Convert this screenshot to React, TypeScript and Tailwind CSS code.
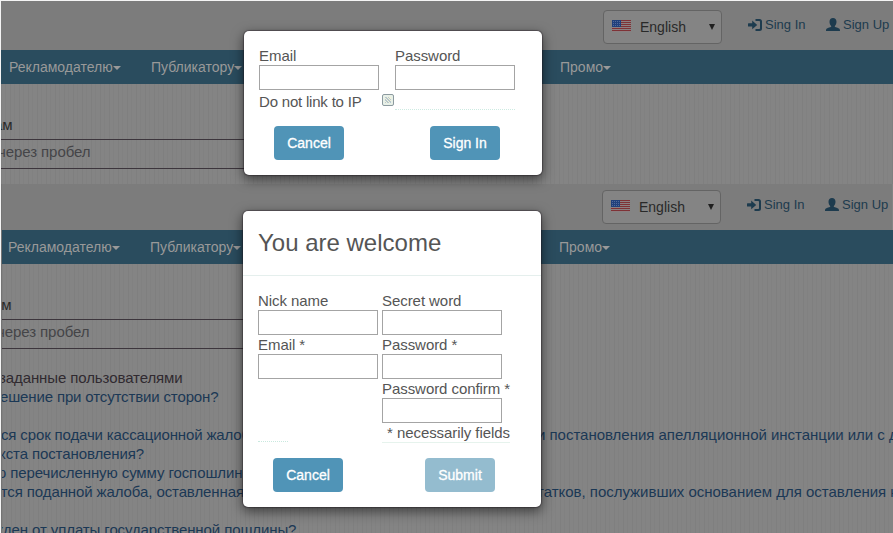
import type { ReactNode } from "react";

const stripes =
  "bg-[#848484] bg-[repeating-linear-gradient(90deg,#7f7f7f_0,#7f7f7f_1px,transparent_1px,transparent_4px,#818181_4px,#818181_5px,transparent_5px,transparent_9px)]";

function Flag() {
  return (
    <svg width="19" height="12" viewBox="0 0 19 12" shapeRendering="crispEdges" className="mb-[2px] shrink-0">
      <rect width="19" height="12" fill="#8c8082" />
      {[0, 2, 4, 6, 8, 10].map((y) => (
        <rect key={y} y={y} width="19" height="1" fill="#7e3236" />
      ))}
      <rect width="9" height="7" fill="#20407c" />
      {[1, 3, 5].map((y) =>
        [1, 3, 5, 7].map((x) => <rect key={`${x}-${y}`} x={x} y={y} width="1" height="1" fill="#52699a" />)
      )}
    </svg>
  );
}

function LogInIcon() {
  return (
    <svg width="14" height="12" viewBox="0 0 14 12" fill="#1d3b4e" className="mb-px shrink-0">
      <path d="M.5 4.300h3.700V1.600l5 4.300-5 4.300V7.600H.5Q0 7.600 0 7V4.900Q0 4.300.5 4.300z" />
      <path d="M7.500 0h4Q14 0 14 2.500v7Q14 12 11.500 12h-4v-2h3.700q.8 0 .8-.8V2.800q0-.8-.8-.8H7.500z" />
    </svg>
  );
}

function UserIcon() {
  return (
    <svg width="14" height="13" viewBox="0 0 14 13" fill="#1d3b4e" className="mb-[2px] shrink-0">
      <path d="M7 0C9.200 0 10.500 1.400 10.500 3.700c0 1.900-.7 3.300-1.700 4.200v.9c1 .6 3.200 1.100 4.200 1.700.7.4 1 1 1 2.500H0c0-1.500.3-2.100 1-2.500 1-.6 3.200-1.100 4.200-1.700v-.9c-1-.9-1.700-2.300-1.700-4.200C3.500 1.400 4.800 0 7 0z" />
    </svg>
  );
}

function Caret() {
  return <span className="mt-[2px] h-0 w-0 border-x-4 border-t-4 border-x-transparent border-t-[#999]" />;
}

function Header() {
  return (
    <div className="flex h-[49px] justify-end bg-[#7c7c7c] text-[#1d3b4e]">
      <div className="mt-[9px] flex h-[34px] w-[119px] items-center rounded-[4px] border border-[#646464] bg-[#848484] pl-2">
        <Flag />
        <span className="ml-[9px] w-[69px] text-[14px] text-[#292929]">English</span>
        <span className="h-0 w-0 border-x-[3.5px] border-t-[6px] border-x-transparent border-t-[#1f1f1f]" />
      </div>
      <div className="ml-[26px] mt-[14px] flex h-5 w-[78px] items-center gap-[3px] text-[13px]">
        <LogInIcon />
        <span>Sing In</span>
      </div>
      <div className="mt-[14px] flex h-5 w-[67px] items-center gap-[3px] text-[13px]">
        <UserIcon />
        <span>Sign Up</span>
      </div>
    </div>
  );
}

function NavItem({ children, className }: { children: ReactNode; className: string }) {
  return (
    <div className={`flex items-center text-[14px] ${className}`}>
      <span>{children}</span>
      <Caret />
    </div>
  );
}

function Nav({ inset }: { inset: string }) {
  return (
    <nav className={`flex h-[34px] bg-[#2a4c5e] text-[#999] ${inset}`}>
      <NavItem className="w-[142px]">Рекламодателю</NavItem>
      <NavItem className="w-[409px]">Публикатору</NavItem>
      <NavItem className="w-[70px]">Промо</NavItem>
    </nav>
  );
}

function SearchArea({ shift }: { shift: string }) {
  return (
    <div className="w-[400px] pt-8 text-[15px] tracking-[-0.08px]">
      <div className={`h-[23px] leading-[18px] text-[#292929] ${shift}`}>
        <span className="-ml-[4px]">ам</span>
      </div>
      <div className="h-[30px] border-y border-[#3c353c] text-[#454548]">
        <span className={`block leading-[24px] ${shift}`}>через пробел</span>
      </div>
    </div>
  );
}

function Field({ label }: { label: string }) {
  return (
    <label className="block w-[120px] whitespace-nowrap">
      <span className="block h-[19px] leading-[19px]">{label}</span>
      <input className="block h-[25px] w-[120px] border border-[#a4a4a4] bg-white" />
    </label>
  );
}

function Button({ children, pale = false }: { children: ReactNode; pale?: boolean }) {
  return (
    <button
      className={`h-[34px] w-[70px] rounded-[4px] text-[14px] text-white [-webkit-text-stroke:0.3px_white] ${pale ? "bg-[#94bccf]" : "bg-[#5094b7]"}`}
    >
      {children}
    </button>
  );
}

const modal =
  "absolute w-[298px] rounded-[5px] bg-white text-[15px] tracking-[-0.06px] text-[#555] shadow-[0_4px_12px_1px_rgba(0,0,0,0.5),0_0_1px_1px_rgba(40,30,40,0.4)]";

function SignInModal() {
  return (
    <div className={`${modal} left-[244px] top-[31px] h-[144px] px-[15px] pt-[15px]`}>
      <div className="flex gap-4">
        <Field label="Email" />
        <Field label="Password" />
      </div>
      <div className="flex h-5 w-64">
        <div className="w-[123px] leading-6 tracking-[-0.2px]">Do not link to IP</div>
        <span className="mt-1 h-3 w-3 rounded-[2px] border border-[#8c9a9f] bg-[#e8f0e8] p-[2px]">
          <span className="block h-full w-full bg-[repeating-linear-gradient(45deg,#b8c8d0_0,#b8c8d0_1px,#f4f3d8_1px,#f4f3d8_2px)]" />
        </span>
        <span className="ml-[1px] flex-1 border-b border-dotted border-[#cdebe2]" />
      </div>
      <div className="mt-4 flex justify-between pl-[15px] pr-[27px] tracking-normal">
        <Button>Cancel</Button>
        <Button>Sign In</Button>
      </div>
    </div>
  );
}

function SignUpModal() {
  return (
    <div className={`${modal} left-[243px] top-[211px] h-[296px]`}>
      <h2 className="h-[65px] border-b border-[#e5efed] pl-[15px] text-[24px] leading-[63px] tracking-normal">
        You are welcome
      </h2>
      <div className="flex gap-1 px-[15px] pt-[15px]">
        <div className="w-[120px]">
          <Field label="Nick name" />
          <Field label="Email *" />
          <div className="h-[63px] w-[30px] border-b border-dotted border-[#c9e9df]" />
        </div>
        <div className="w-32">
          <Field label="Secret word" />
          <Field label="Password *" />
          <Field label="Password confirm *" />
          <div className="h-5 whitespace-nowrap border-b border-[#e6f3ed] pl-[5px] leading-5">* necessarily fields</div>
        </div>
      </div>
      <div className="mt-[15px] flex justify-between pl-[30px] pr-[46px] tracking-normal">
        <Button>Cancel</Button>
        <Button pale>Submit</Button>
      </div>
    </div>
  );
}

function Question({ left, right, className }: { left: string; right?: string; className: string }) {
  return (
    <div className="flex h-[19px] leading-[19px]">
      <span className={`w-[536px] shrink-0 ${className}`}>{left}</span>
      <span className="tracking-[-0.02px]">{right}</span>
    </div>
  );
}

export default function App() {
  return (
    <main className="relative h-[533px] w-[893px] overflow-hidden whitespace-nowrap bg-[#f4f4f4] pl-px pt-px font-['Liberation_Sans',sans-serif]">
      <section className={`h-[183px] overflow-hidden ${stripes}`}>
        <Header />
        <Nav inset="pl-2" />
        <SearchArea shift="-ml-[3px]" />
      </section>
      <section className={`h-[349px] overflow-hidden border-l border-[#747474] ${stripes}`}>
        <div className="-ml-px -mt-[3px]">
          <div className="pr-px">
            <Header />
          </div>
          <Nav inset="pl-[7px]" />
          <SearchArea shift="-ml-1" />
          <div className="mt-[19px] text-[15px] tracking-[-0.1px] text-[#1b3855]">
            <Question left="заданные пользователями" className="-ml-[2px] mr-[2px] text-[#302a30]" />
            <Question left="ешение при отсутствии сторон?" className="-ml-px mr-px tracking-[-0.14px]" />
            <div className="h-[19px]" />
            <Question left="ся срок подачи кассационной жалобы" right="и постановления апелляционной инстанции или с даты" className="tracking-[-0.14px]" />
            <Question left="кста постановления?" className="-ml-[2px] mr-[2px]" />
            <Question left="ю перечисленную сумму госпошлины" className="-ml-[6px] mr-[6px]" />
            <Question left="ется поданной жалоба, оставленная" right="татков, послуживших основанием для оставления ка" className="-ml-[8px] mr-[8px]" />
            <div className="h-[19px]" />
            <Question left="жден от уплаты государственной пошлины?" className="-ml-[8px] mr-[8px]" />
          </div>
        </div>
      </section>
      <SignInModal />
      <SignUpModal />
    </main>
  );
}
